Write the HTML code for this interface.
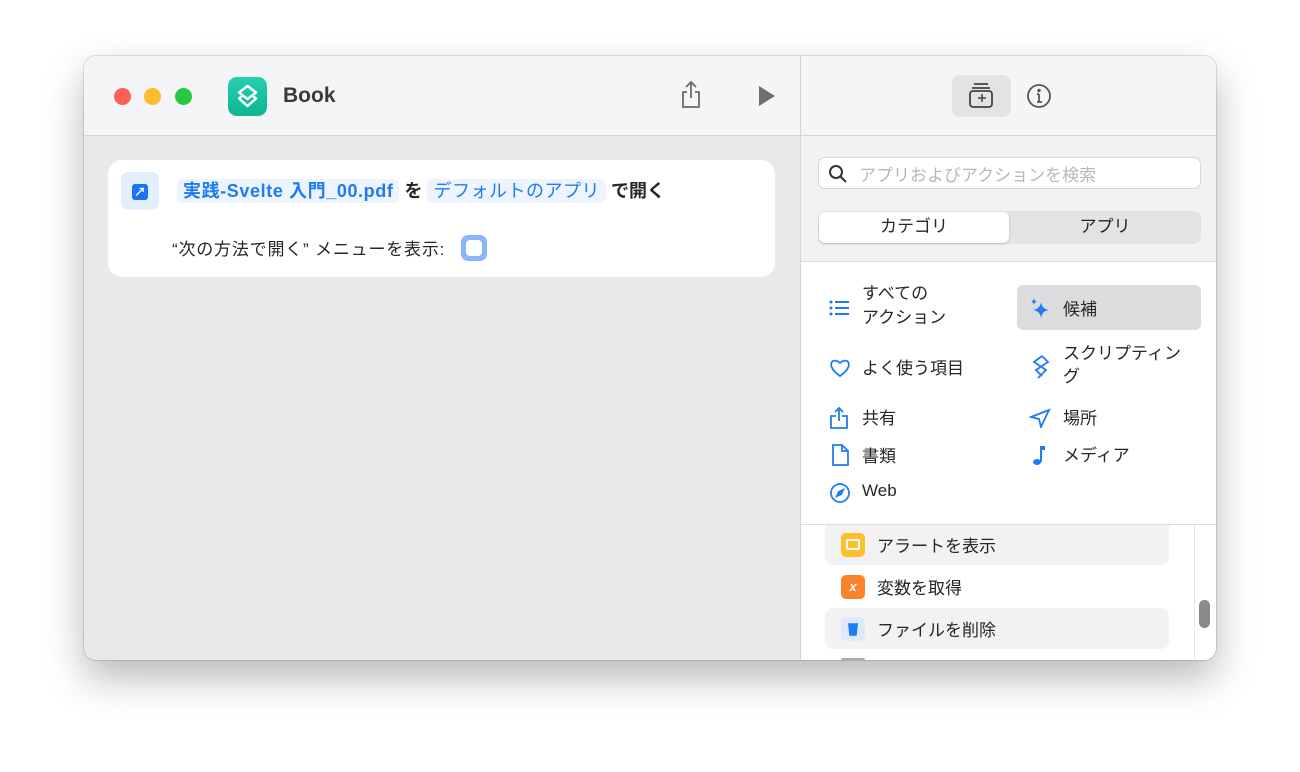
<!DOCTYPE html>
<html><head><meta charset="utf-8"><style>
*{box-sizing:border-box;margin:0;padding:0}
body{width:1300px;height:772px;background:#fff;position:relative;overflow:hidden;font-family:"Liberation Sans","Noto Sans CJK JP",sans-serif;color:#262626}
.win{position:absolute;left:84px;top:56px;width:1132px;height:604px;border-radius:12px;overflow:hidden;background:#e9e9eb;box-shadow:0 18px 40px rgba(0,0,0,.28),0 0 0 1px rgba(0,0,0,.12)}
.abs{position:absolute}
.tb{left:0;top:0;width:716px;height:80px;background:#f5f5f7;border-bottom:1px solid #d4d4d6}
.dot{width:17px;height:17px;border-radius:50%;top:32px}
.rp{left:716px;top:0;width:416px;height:604px;border-left:1px solid #d4d4d6;background:#fff}
.pill{background:#eef4fd;border-radius:6px;padding:2px 6px;color:#1c7cf2}
.cat{font-size:17px;color:#262626;position:absolute}
.ic{position:absolute}
</style></head><body>
<div class="win">
 <div class="abs tb">
  <div class="abs dot" style="left:30px;background:#fe5f57"></div>
  <div class="abs dot" style="left:60px;background:#febc2e"></div>
  <div class="abs dot" style="left:91px;background:#28c840"></div>
  <div class="abs" style="left:144px;top:21px;width:39px;height:39px;border-radius:9px;background:linear-gradient(#25d0b0,#10b592)">
   <svg width="39" height="39" viewBox="0 0 39 39" fill="none" stroke="#fff" stroke-width="2.4" stroke-linejoin="round"><path d="M19.5 9 L28 15.5 L19.5 22 L11 15.5Z"/><path d="M14 19 L11 21.5 L19.5 29 L28 21.5 L25 19"/></svg>
  </div>
  <div class="abs" style="left:199px;top:28px;font-size:21px;font-weight:bold;color:#3a3a3a">Book</div>
  <svg class="abs" style="left:595px;top:24px" width="24" height="30" viewBox="0 0 24 30" fill="none" stroke="#6a6a6a" stroke-width="1.8"><path d="M12 2v16M7 7l5-5 5 5M8 12H4v15h16V12h-4"/></svg>
  <svg class="abs" style="left:674px;top:30px" width="18" height="20"><path d="M1 0L17 10 1 20Z" fill="#6e6e6e"/></svg>
 </div>
 <div class="abs" style="left:24px;top:104px;width:667px;height:117px;background:#fff;border-radius:14px">
  <div class="abs" style="left:13px;top:12px;width:38px;height:38px;border-radius:7px;background:#e4effd"></div>
  <div class="abs" style="left:24px;top:24px;width:16px;height:16px;border-radius:3px;background:#1a74ee;color:#fff;font-size:12px;line-height:16px;text-align:center;font-weight:bold">↗</div>
  <div class="abs" style="left:69px;top:17px;font-size:18px;white-space:nowrap;font-weight:bold"><span class="pill" style="font-weight:bold;letter-spacing:.6px">実践-Svelte 入門_00.pdf</span> を <span class="pill" style="font-weight:normal;letter-spacing:.5px">デフォルトのアプリ</span> で開く</div>
  <div class="abs" style="left:64px;top:75px;font-size:17px;white-space:nowrap;letter-spacing:.8px">“次の方法で開く” メニューを表示:</div>
  <div class="abs" style="left:353px;top:75px;width:26px;height:26px;border-radius:7px;background:#8ab6f8"><div style="margin:5px;width:16px;height:16px;border-radius:4px;background:#fff"></div></div>
 </div>
 <div class="abs rp">
  <div class="abs" style="left:0;top:0;width:416px;height:80px;background:#f5f5f7;border-bottom:1px solid #d4d4d6"></div>
  <div class="abs" style="left:151px;top:19px;width:59px;height:42px;border-radius:8px;background:#e3e3e5"></div>
  <svg class="abs" style="left:165px;top:25px" width="30" height="30" viewBox="0 0 30 30" fill="none" stroke="#444" stroke-width="1.8"><path d="M8 3h14M6 7h18"/><rect x="4" y="10" width="22" height="16" rx="3"/><path d="M16 13v8M12 17h8" stroke-width="1.5"/></svg>
  <svg class="abs" style="left:225px;top:27px" width="26" height="26" viewBox="0 0 26 26" fill="none" stroke="#555" stroke-width="1.8"><circle cx="13" cy="13" r="11"/><path d="M13 11v8M11 19h5M11 11h2"/><circle cx="13" cy="7.5" r="0.8" fill="#555"/></svg>
  <div class="abs" style="left:0;top:80px;width:416px;height:126px;background:#f2f2f4;border-bottom:1px solid #dcdcde"></div>
  <div class="abs" style="left:17px;top:101px;width:383px;height:32px;background:#fff;border-radius:7px;border:1px solid #d6d6d8"></div>
  <svg class="abs" style="left:27px;top:108px" width="20" height="20" viewBox="0 0 20 20" fill="none" stroke="#333" stroke-width="2"><circle cx="8" cy="8" r="6"/><path d="M12.5 12.5L18 18"/></svg>
  <div class="abs" style="left:58px;top:105px;font-size:17px;color:#b8b8ba">アプリおよびアクションを検索</div>
  <div class="abs" style="left:17px;top:155px;width:383px;height:33px;background:#e3e3e5;border-radius:7px"></div>
  <div class="abs" style="left:18px;top:156px;width:190px;height:31px;background:#fff;border-radius:6px;box-shadow:0 1px 2px rgba(0,0,0,.2);text-align:center;font-size:17px;line-height:29px">カテゴリ</div>
  <div class="abs" style="left:208px;top:156px;width:192px;height:31px;text-align:center;font-size:17px;line-height:29px">アプリ</div>
  <div class="abs" style="left:216px;top:229px;width:184px;height:45px;background:#dcdcde;border-radius:6px"></div>
  <svg class="ic" style="left:28px;top:244px" width="20" height="16" fill="#1f7cf2"><circle cx="2" cy="2" r="1.5"/><circle cx="2" cy="8" r="1.5"/><circle cx="2" cy="14" r="1.5"/><rect x="6" y="1" width="14" height="2"/><rect x="6" y="7" width="14" height="2"/><rect x="6" y="13" width="14" height="2"/></svg>
  <div class="cat" style="left:61px;top:226px;line-height:24px">すべての<br>アクション</div>
  <svg class="ic" style="left:228px;top:240px" width="22" height="24" fill="#1f7cf2"><path d="M12 6 Q13 13 20 14 Q13 15 12 22 Q11 15 4 14 Q11 13 12 6Z"/><path d="M5 2 Q5.5 5 8 5.5 Q5.5 6 5 9 Q4.5 6 2 5.5 Q4.5 5 5 2Z"/></svg>
  <div class="cat" style="left:262px;top:239px">候補</div>
  <svg class="ic" style="left:28px;top:302px" width="22" height="20" fill="none" stroke="#1f7cf2" stroke-width="1.8"><path d="M11 18 C-4 8 3 -2 11 5 C19 -2 26 8 11 18Z"/></svg>
  <div class="cat" style="left:61px;top:298px">よく使う項目</div>
  <svg class="ic" style="left:228px;top:298px" width="22" height="26" fill="none" stroke="#1f7cf2" stroke-width="1.8"><path d="M13 2 L19 8 L7 16 L13 22 M13 2 L5 8 L17 16 L9 24"/></svg>
  <div class="cat" style="left:262px;top:286px;line-height:23px">スクリプティン<br>グ</div>
  <svg class="ic" style="left:28px;top:350px" width="20" height="24" fill="none" stroke="#1f7cf2" stroke-width="1.8"><path d="M10 2v13M6 6l4-4 4 4M7 10H2v12h16V10h-5"/></svg>
  <div class="cat" style="left:61px;top:348px">共有</div>
  <svg class="ic" style="left:228px;top:352px" width="22" height="20" fill="none" stroke="#1f7cf2" stroke-width="1.8"><path d="M20 2 L2 9 L10 11 L12 19Z"/></svg>
  <div class="cat" style="left:262px;top:348px">場所</div>
  <svg class="ic" style="left:30px;top:388px" width="18" height="22" fill="none" stroke="#1f7cf2" stroke-width="1.8"><path d="M2 1h9l6 6v14H2Z M11 1v6h6"/></svg>
  <div class="cat" style="left:61px;top:386px">書類</div>
  <svg class="ic" style="left:230px;top:388px" width="16" height="22" fill="#1f7cf2"><path d="M9 2h5v4h-3v12h-2Z"/><ellipse cx="6" cy="18" rx="4" ry="3"/></svg>
  <div class="cat" style="left:262px;top:385px">メディア</div>
  <svg class="ic" style="left:28px;top:426px" width="22" height="22" fill="none" stroke="#1f7cf2" stroke-width="1.8"><circle cx="11" cy="11" r="9"/><path d="M15 7L12.5 12.5 7 15 9.5 9.5Z" fill="#1f7cf2" stroke-width="1"/></svg>
  <div class="cat" style="left:61px;top:425px">Web</div>
  <div class="abs" style="left:0;top:468px;width:416px;height:1px;background:#dcdcde"></div>
  <div class="abs" style="left:393px;top:469px;width:1px;height:135px;background:#e6e6e6"></div>
  <div class="abs" style="left:398px;top:544px;width:11px;height:28px;border-radius:6px;background:#8a8a8a"></div>
  <div class="abs" style="left:24px;top:469px;width:344px;height:40px;background:#f2f2f3;border-radius:0 0 8px 8px"></div>
  <div class="abs" style="left:40px;top:477px;width:24px;height:24px;border-radius:5px;background:#fdc02b"><div style="margin:6px 5px;width:14px;height:11px;border:2px solid #fff;border-radius:2px"></div></div>
  <div class="cat" style="left:76px;top:476px">アラートを表示</div>
  <div class="abs" style="left:40px;top:519px;width:24px;height:24px;border-radius:5px;background:#f9842b;color:#fff;font-style:italic;font-weight:bold;font-size:13px;text-align:center;line-height:24px">x</div>
  <div class="cat" style="left:76px;top:518px">変数を取得</div>
  <div class="abs" style="left:24px;top:552px;width:344px;height:41px;background:#f2f2f3;border-radius:8px"></div>
  <div class="abs" style="left:40px;top:561px;width:24px;height:24px;border-radius:5px;background:#deeafc"><svg width="24" height="24"><path d="M8 8h8l-1 10h-6Z M7 7h10" fill="#1f7cf2" stroke="#1f7cf2" stroke-width="1.5"/></svg></div>
  <div class="cat" style="left:76px;top:560px">ファイルを削除</div>
  <div class="abs" style="left:40px;top:602px;width:24px;height:4px;border-radius:3px;background:#aaa"></div>
 </div>
</div>
</body></html>
